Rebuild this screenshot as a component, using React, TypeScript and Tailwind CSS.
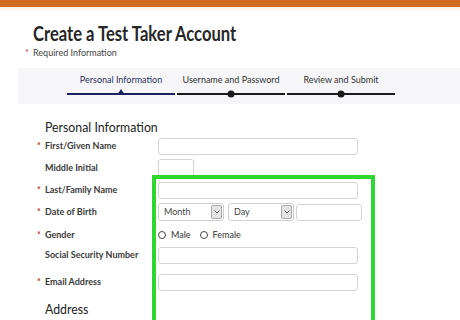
import React from "react";

const label = "text-[9px] leading-[12px] font-bold text-[#3a3a3a]";

function Star({ show }: { show?: boolean }) {
  return (
    <span className="w-[8px] text-[9px] leading-[12px] text-[#b03a3a] font-bold">{show ? "*" : ""}</span>
  );
}

function Input({ w }: { w: string }) {
  return <div className={`${w} h-[17px] bg-white border border-[#d4d4d4] rounded-[3px]`} />;
}

function Select({ text }: { text: string }) {
  return (
    <div className="w-[66px] h-[18px] bg-white border border-[#cfcfcf] rounded-[3px] flex items-center pl-[5px] pr-px">
      <span className="text-[9px] text-[#444]">{text}</span>
      <div className="ml-auto w-[11px] h-[14px] bg-[#e4e4e4] border border-[#aaa] rounded-[2px] flex items-center justify-center">
        <svg width="6" height="4" viewBox="0 0 6 4"><path d="M0.5 0.5 L3 3 L5.5 0.5" fill="none" stroke="#444" strokeWidth="0.9" /></svg>
      </div>
    </div>
  );
}

function Radio({ text }: { text: string }) {
  return (
    <div className="flex items-center">
      <div className="w-[8px] h-[8px] rounded-full border border-[#444] bg-white" />
      <span className="ml-[5px] text-[9px] text-[#333]">{text}</span>
    </div>
  );
}

export default function App() {
  return (
    <div className="relative w-[460px] h-[320px] overflow-hidden bg-white font-['Lato',sans-serif]">
      <div className="h-[7px] bg-[#cf6a1f]" />
      <div className="h-[5px] bg-gradient-to-b from-[#fdeede] to-white" />
      <div className="mt-[10px] pl-[33px] h-[21px]">
        <span className="inline-block origin-left scale-x-[0.79] text-[21px] leading-[21px] font-bold text-[#262626] whitespace-nowrap">
          Create a Test Taker Account
        </span>
      </div>
      <div className="mt-[4px] pl-[25px] h-[12px] flex items-center text-[9px] leading-[12px] text-[#444]">
        <span className="text-[#b03a3a] w-[8px]">*</span>
        <span>Required Information</span>
      </div>
      <div className="mt-[9px] ml-[18px] h-[36px] bg-[#f6f6f8] pl-[49px] pt-[6px] flex gap-[2px]">
        {[
          { t: "Personal Information", active: true },
          { t: "Username and Password" },
          { t: "Review and Submit" },
        ].map((s) => (
          <div key={s.t} className="w-[108px] flex flex-col items-center">
            <span className={`text-[9px] leading-[12px] whitespace-nowrap ${s.active ? "text-[#2e2f5e]" : "text-[#333]"}`}>{s.t}</span>
            <div className={`relative mt-[7px] w-full h-[2px] ${s.active ? "bg-[#1e2160]" : "bg-[#1a1a1a]"}`}>
              {s.active ? (
                <div className="absolute left-1/2 -translate-x-1/2 bottom-0 w-0 h-0 border-l-[4px] border-r-[4px] border-b-[6px] border-l-transparent border-r-transparent border-b-[#1e2160]" />
              ) : (
                <div className="absolute left-1/2 top-1/2 -translate-x-1/2 -translate-y-1/2 w-[7px] h-[7px] rounded-full bg-[#1a1a1a]" />
              )}
            </div>
          </div>
        ))}
      </div>
      <div className="mt-[10px] pl-[45px] h-[16px]">
        <span className="inline-block origin-left scale-x-[0.88] text-[14px] leading-[16px] text-[#222] whitespace-nowrap">
          Personal Information
        </span>
      </div>
      <div className="mt-[5px] flex flex-col">
        <div className="flex items-center pl-[37px] h-[22px]">
          <Star show />
          <span className={`${label} w-[113px]`}>First/Given Name</span>
          <Input w="w-[200px]" />
        </div>
        <div className="flex items-center pl-[37px] h-[22px]">
          <Star />
          <span className={`${label} w-[113px]`}>Middle Initial</span>
          <div className="w-[36px] h-[19px] bg-white border border-[#d4d4d4] rounded-[3px]" />
        </div>
        <div className="flex items-center pl-[37px] h-[22px]">
          <Star show />
          <span className={`${label} w-[113px]`}>Last/Family Name</span>
          <Input w="w-[200px]" />
        </div>
        <div className="flex items-center pl-[37px] h-[22px]">
          <Star show />
          <span className={`${label} w-[113px]`}>Date of Birth</span>
          <Select text="Month" />
          <div className="ml-[4px]"><Select text="Day" /></div>
          <div className="ml-[2px]"><Input w="w-[66px]" /></div>
        </div>
        <div className="flex items-center pl-[37px] h-[23px]">
          <Star show />
          <span className={`${label} w-[113px]`}>Gender</span>
          <Radio text="Male" />
          <div className="ml-[9px]"><Radio text="Female" /></div>
        </div>
        <div className="flex items-center pl-[37px] h-[18px]">
          <Star />
          <span className={`${label} w-[113px]`}>Social Security Number</span>
          <Input w="w-[200px]" />
        </div>
        <div className="flex items-center pl-[37px] h-[18px] mt-[9px]">
          <Star show />
          <span className={`${label} w-[113px]`}>Email Address</span>
          <Input w="w-[200px]" />
        </div>
      </div>
      <div className="mt-[5px] pl-[45px] h-[16px]">
        <span className="inline-block origin-left scale-x-[0.88] text-[14px] leading-[16px] text-[#222] whitespace-nowrap">
          Address
        </span>
      </div>
      <div className="absolute left-[152px] top-[175px] w-[223px] h-[170px] border-[4px] border-[#2fd62f]" />
    </div>
  );
}
